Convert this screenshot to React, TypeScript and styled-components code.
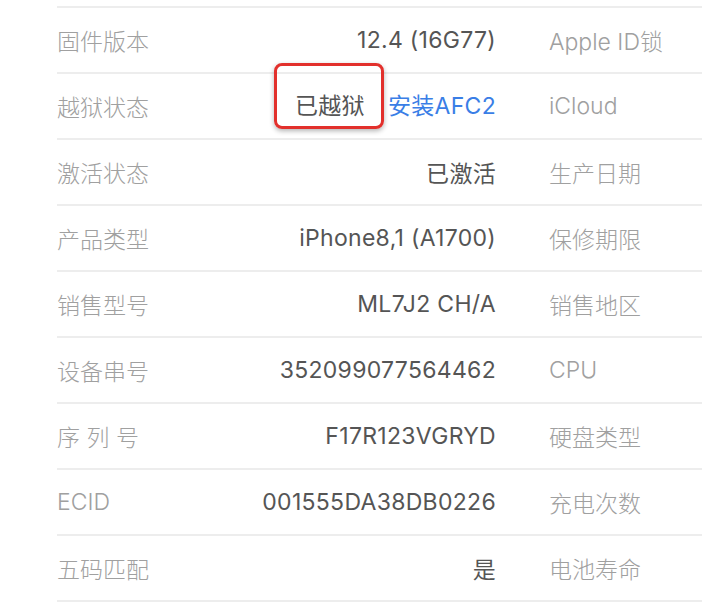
import React from 'react'
import styled, { createGlobalStyle } from 'styled-components'

interface IInfoRow {
  label: string
  value: React.ReactNode
  side: string
}

const GlobalStyle = createGlobalStyle`
  html, body {
    margin: 0;
    padding: 0;
    background: #ffffff;
  }
  body {
    font-family: Inter, 'Noto Sans CJK SC', sans-serif;
  }
`

const Page = styled.div`
  width: 702px;
  height: 612px;
  padding-top: 6px;
  box-sizing: border-box;
  overflow: hidden;
`

const List = styled.div`
  margin-left: 57px;
  border-top: 2px solid #ededed;
`

const Row = styled.div`
  display: grid;
  grid-template-columns: 120px 319px 1fr;
  height: 64px;
  align-items: center;
  border-bottom: 2px solid #ededed;
  font-size: 23px;
`

const Label = styled.div`
  color: #a0a0a0;
  font-weight: 300;
  white-space: nowrap;
`

const Value = styled.div`
  color: #555555;
  text-align: right;
  letter-spacing: 0.3px;
  white-space: nowrap;
`

const SideLabel = styled.div`
  color: #a0a0a0;
  font-weight: 300;
  padding-left: 53px;
  white-space: nowrap;
`

const Marked = styled.span`
  position: relative;
  display: inline-block;
  line-height: 64px;
  margin-right: 23px;

  &::after {
    content: '';
    position: absolute;
    left: -21px;
    right: -19px;
    top: -11px;
    bottom: 9px;
    border: 3px solid #e2302c;
    border-radius: 8px;
    box-shadow: 0 2px 5px rgba(0, 0, 0, 0.3);
  }
`

const Link = styled.span`
  color: #3a7ee6;
`

const rows: IInfoRow[] = [
  { label: '固件版本', value: '12.4 (16G77)', side: 'Apple ID锁' },
  {
    label: '越狱状态',
    value: (
      <>
        <Marked>已越狱</Marked>
        <Link>安装AFC2</Link>
      </>
    ),
    side: 'iCloud',
  },
  { label: '激活状态', value: '已激活', side: '生产日期' },
  { label: '产品类型', value: 'iPhone8,1 (A1700)', side: '保修期限' },
  { label: '销售型号', value: 'ML7J2 CH/A', side: '销售地区' },
  { label: '设备串号', value: '352099077564462', side: 'CPU' },
  { label: '序 列 号', value: 'F17R123VGRYD', side: '硬盘类型' },
  { label: 'ECID', value: '001555DA38DB0226', side: '充电次数' },
  { label: '五码匹配', value: '是', side: '电池寿命' },
]

const App: React.FC = () => (
  <>
    <GlobalStyle />
    <Page>
      <List>
        {rows.map((row) => (
          <Row key={row.label}>
            <Label>{row.label}</Label>
            <Value>{row.value}</Value>
            <SideLabel>{row.side}</SideLabel>
          </Row>
        ))}
      </List>
    </Page>
  </>
)

export default App
